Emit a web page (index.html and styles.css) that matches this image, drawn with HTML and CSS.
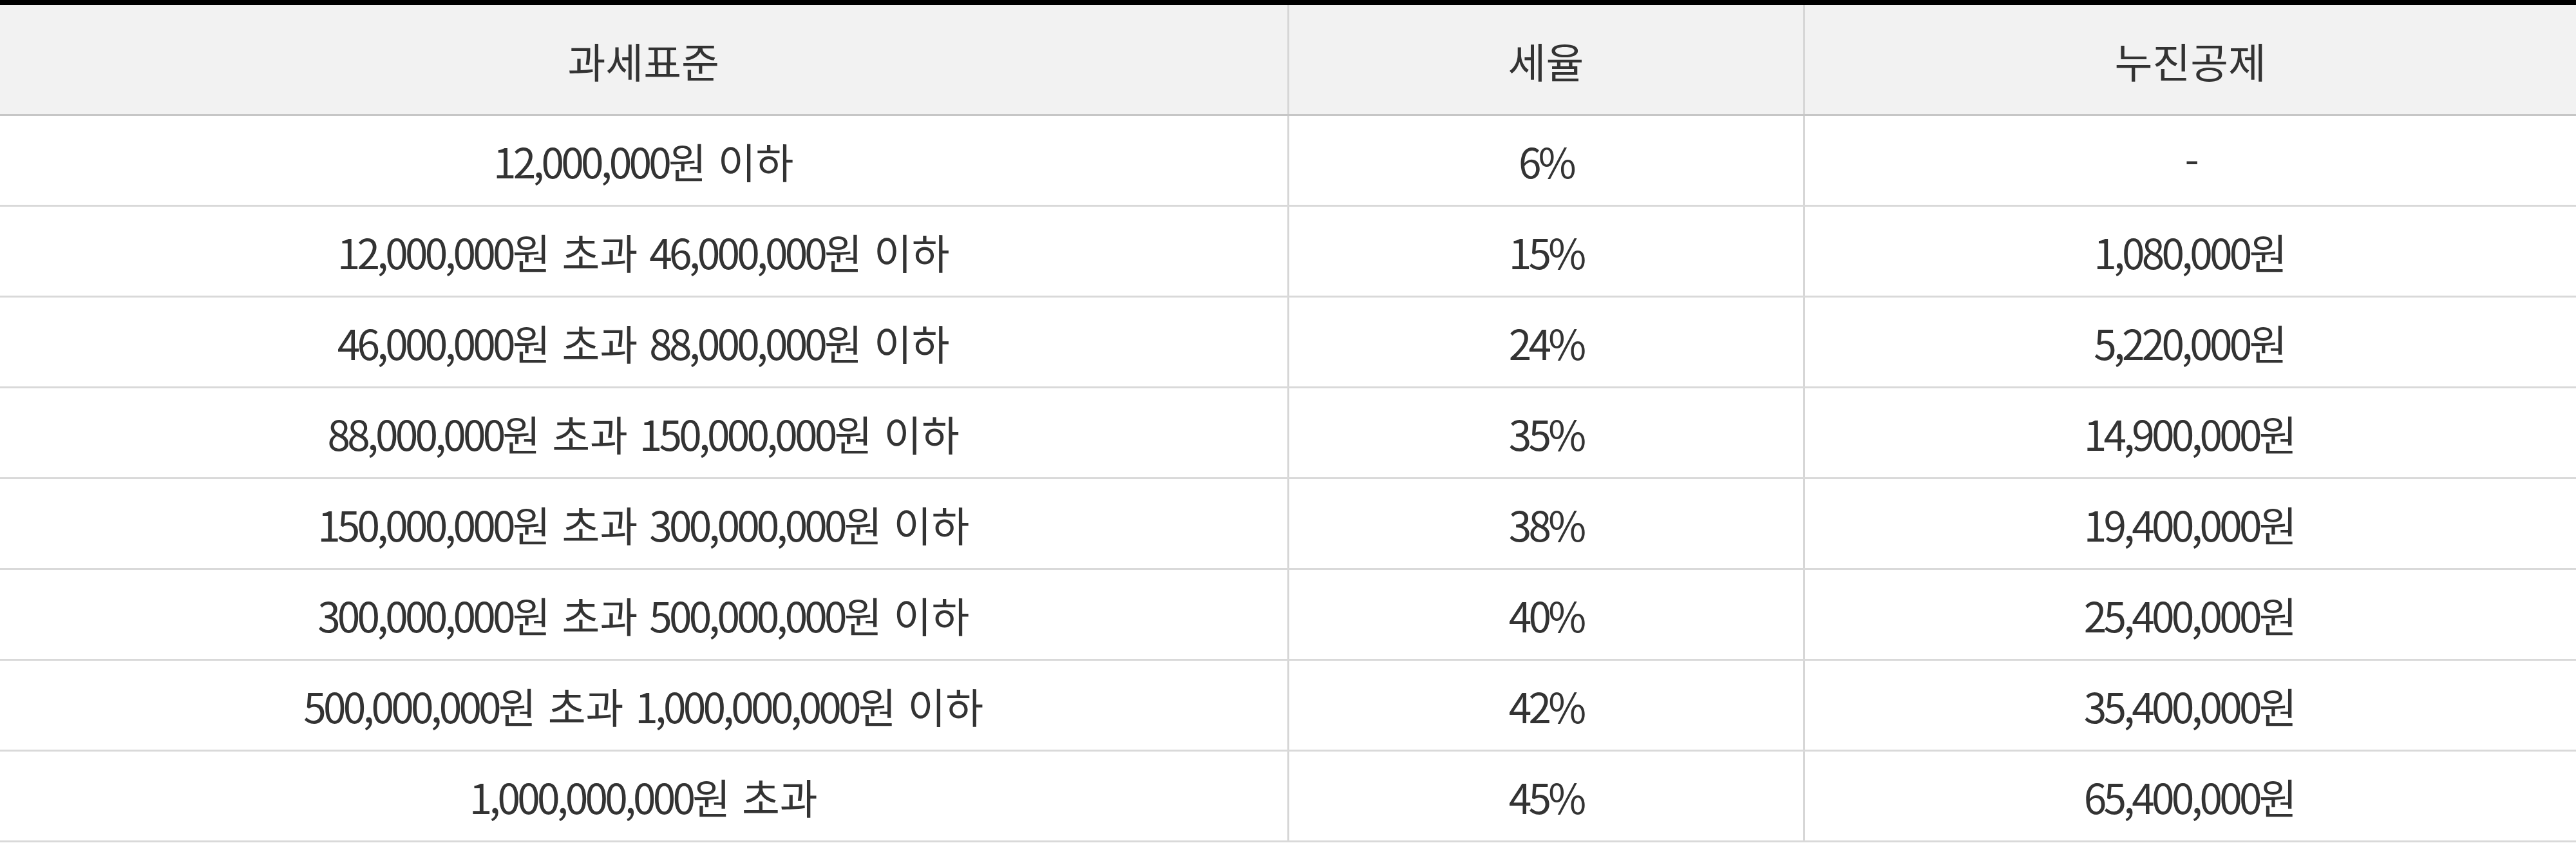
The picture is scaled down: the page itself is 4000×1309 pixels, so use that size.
FILE: index.html
```html
<!DOCTYPE html>
<html lang="ko">
<head>
<meta charset="utf-8">
<title>종합소득세 세율</title>
<link rel="stylesheet" href="styles.css">
</head>
<body>
<table class="tax-table">
  <colgroup>
    <col class="col-base">
    <col class="col-rate">
    <col class="col-deduct">
  </colgroup>
  <thead>
    <tr>
      <th>과세표준</th>
      <th>세율</th>
      <th>누진공제</th>
    </tr>
  </thead>
  <tbody>
    <tr><td><span class="num">12,000,000</span>원 이하</td><td><span class="num">6%</span></td><td><span class="num">-</span></td></tr>
    <tr><td><span class="num">12,000,000</span>원 초과 <span class="num">46,000,000</span>원 이하</td><td><span class="num">15%</span></td><td><span class="num">1,080,000</span>원</td></tr>
    <tr><td><span class="num">46,000,000</span>원 초과 <span class="num">88,000,000</span>원 이하</td><td><span class="num">24%</span></td><td><span class="num">5,220,000</span>원</td></tr>
    <tr><td><span class="num">88,000,000</span>원 초과 <span class="num">150,000,000</span>원 이하</td><td><span class="num">35%</span></td><td><span class="num">14,900,000</span>원</td></tr>
    <tr><td><span class="num">150,000,000</span>원 초과 <span class="num">300,000,000</span>원 이하</td><td><span class="num">38%</span></td><td><span class="num">19,400,000</span>원</td></tr>
    <tr><td><span class="num">300,000,000</span>원 초과 <span class="num">500,000,000</span>원 이하</td><td><span class="num">40%</span></td><td><span class="num">25,400,000</span>원</td></tr>
    <tr><td><span class="num">500,000,000</span>원 초과 <span class="num">1,000,000,000</span>원 이하</td><td><span class="num">42%</span></td><td><span class="num">35,400,000</span>원</td></tr>
    <tr><td><span class="num">1,000,000,000</span>원 초과</td><td><span class="num">45%</span></td><td><span class="num">65,400,000</span>원</td></tr>
  </tbody>
</table>
</body>
</html>
```

FILE: styles.css
```css
html, body {
  margin: 0;
  padding: 0;
  background: #ffffff;
}

.tax-table {
  width: 4000px;
  border-collapse: collapse;
  table-layout: fixed;
  border-top: 8px solid #000000;
  font-family: "Noto Sans CJK KR", "Noto Sans", sans-serif;
  font-size: 64px;
  font-weight: 400;
  color: #333333;
}

.col-base { width: 2000px; }
.col-rate { width: 801px; }
.col-deduct { width: 1199px; }

.tax-table th,
.tax-table td {
  text-align: center;
  vertical-align: middle;
  padding: 0;
  border-left: 3px solid #d6d6d6;
  border-right: 3px solid #d6d6d6;
}

.tax-table th:first-child,
.tax-table td:first-child {
  border-left: none;
}

.tax-table th:last-child,
.tax-table td:last-child {
  border-right: none;
}

.tax-table th {
  height: 169px;
  background: #f2f2f2;
  font-weight: 400;
  border-bottom: 3px solid #c6c6c6;
}

.tax-table td {
  height: 138px;
  border-bottom: 3px solid #d9d9d9;
}

.num {
  letter-spacing: -4.8px;
}
```
